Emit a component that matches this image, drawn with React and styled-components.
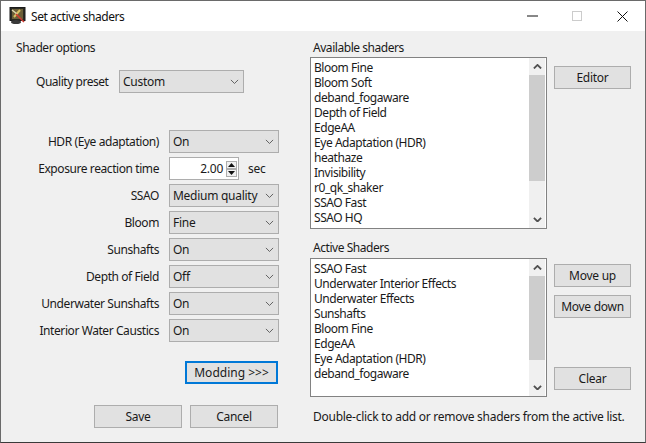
import React from "react";
import styled, { createGlobalStyle } from "styled-components";

const Global = createGlobalStyle`
  html, body { margin: 0; padding: 0; background: #e9e9e9; }
  #root { width: 646px; height: 443px; overflow: hidden; }
  * { box-sizing: border-box; }
`;

const Window = styled.div`
  width: 646px; height: 443px;
  border: 1px solid #6a6a6a; border-bottom-color: #3a3a3a;
  background: #f0f0f0;
  font-family: "Noto Sans", sans-serif;
  font-size: 12px; color: #1a1a1a; letter-spacing: -0.27px;
  display: flex; flex-direction: column;
`;
const TitleBar = styled.div`
  height: 30px; background: #fff; flex: none;
  display: flex; align-items: center; padding-left: 8px;
`;
const Title = styled.div`
  margin-left: 5px; flex: 1; font-size: 12px; color: #111; letter-spacing: -0.45px;
`;
const WinButton = styled.div`
  width: 45px; height: 30px; display: flex; align-items: center; justify-content: center;
`;
const Body = styled.div`
  flex: 1; display: flex; padding: 9px 14px 0 15px;
`;
const Left = styled.div`
  width: 263px; flex: none; margin-right: 31px;
  display: flex; flex-direction: column;
`;
const Right = styled.div`
  flex: 1; display: flex; flex-direction: column;
`;
const Heading = styled.div`
  height: 14px; line-height: 16px; white-space: nowrap; letter-spacing: -0.45px;
`;
const ListHeading = styled(Heading)`
  margin-left: 3px; margin-top: ${p => p.$mt || 0}px;
`;
const PresetRow = styled.div`
  display: flex; align-items: center; margin: 16px 0 37px 20px; gap: 6px;
`;
const Options = styled.div`
  display: flex; flex-direction: column; gap: 4px;
`;
const OptionRow = styled.div`
  display: flex; align-items: center; height: 23px;
`;
const Label = styled.div`
  width: 143px; margin-right: 10px; text-align: right; flex: none; white-space: nowrap; letter-spacing: -0.42px;
`;
const PresetLabel = styled.div`
  white-space: nowrap; width: 77px; letter-spacing: -0.47px;
`;
const Select = styled.div`
  width: ${p => p.$w}px; height: 23px; flex: none;
  background: #e1e1e1; border: 1px solid #adadad;
  display: flex; align-items: center; justify-content: space-between;
  padding: 0 4px 0 3px; white-space: nowrap;
`;
const Spin = styled.div`
  width: 70px; height: 23px; background: #fff; border: 1px solid #adadad;
  display: flex; align-items: center; justify-content: flex-end; padding-right: 1px;
`;
const SpinValue = styled.span`margin-right: 3px;`;
const SpinButtons = styled.div`
  display: flex; flex-direction: column; width: 11px;
`;
const SpinButton = styled.div`
  height: 8px; border: 1px solid #adadad; background: #f0f0f0;
  display: flex; align-items: center; justify-content: center;
`;
const Unit = styled.span`margin-left: 9px;`;
const Btn = styled.div`
  width: ${p => p.$w}px; height: 23px; flex: none;
  background: #e1e1e1; border: ${p => (p.$focus ? "2px solid #0078d7" : "1px solid #adadad")};
  display: flex; align-items: center; justify-content: center; white-space: nowrap;
  letter-spacing: ${p => (p.$focus ? "0" : "inherit")};
`;
const ModdingRow = styled.div`
  display: flex; justify-content: flex-end; margin: 19px 1px 0 0;
`;
const FooterRow = styled.div`
  display: flex; justify-content: flex-end; gap: 8px; margin: 21px 1px 0 0;
`;
const ListRow = styled.div`
  display: flex; gap: 7px; margin-top: ${p => p.$mt}px;
`;
const List = styled.div`
  width: 237px; height: ${p => p.$h}px; background: #fff; border: 1px solid #828282;
  display: flex; flex: none;
`;
const Items = styled.div`
  flex: 1; padding: 2px 3px; line-height: 15px; white-space: nowrap; overflow: hidden; letter-spacing: -0.45px;
`;
const Scroll = styled.div`
  width: 16px; flex: none; margin-right: 1px; background: #f0f0f0;
  display: flex; flex-direction: column; align-items: stretch;
`;
const ScrollArrow = styled.div`
  height: 17px; flex: none; display: flex; align-items: center; justify-content: center;
`;
const Thumb = styled.div`
  height: ${p => p.$h}px; background: #cdcdcd; flex: none;
`;
const Track = styled.div`flex: 1;`;
const SideButtons = styled.div`
  display: flex; flex-direction: column; padding-top: ${p => p.$pt}px;
`;
const Spacer = styled.div`height: ${p => p.$h}px;`;
const Hint = styled.div`
  margin: 11px 0 0 3px; white-space: nowrap;
`;

const Chevron = ({ up, size = 9, color = "#555", width = 1 }) => (
  <svg width={size} height={size * 0.6} viewBox="0 0 10 6">
    <path d={up ? "M1 5 L5 1 L9 5" : "M1 1 L5 5 L9 1"} fill="none" stroke={color} strokeWidth={width} />
  </svg>
);

const Triangle = ({ up }) => (
  <svg width="7" height="4" viewBox="0 0 7 4">
    <path d={up ? "M0 4 L3.5 0 L7 4Z" : "M0 0 L3.5 4 L7 0Z"} fill="#111" />
  </svg>
);

const DropSelect = ({ w, value }) => (
  <Select $w={w}>
    <span>{value}</span>
    <Chevron />
  </Select>
);

const ScrollBar = ({ thumb }) => (
  <Scroll>
    <ScrollArrow><Chevron up size={9} color="#505050" width={2} /></ScrollArrow>
    <Thumb $h={thumb} />
    <Track />
    <ScrollArrow><Chevron size={9} color="#505050" width={2} /></ScrollArrow>
  </Scroll>
);

const options = [
  ["HDR (Eye adaptation)", "On"],
  ["Exposure reaction time", null],
  ["SSAO", "Medium quality"],
  ["Bloom", "Fine"],
  ["Sunshafts", "On"],
  ["Depth of Field", "Off"],
  ["Underwater Sunshafts", "On"],
  ["Interior Water Caustics", "On"],
];
const available = ["Bloom Fine", "Bloom Soft", "deband_fogaware", "Depth of Field", "EdgeAA", "Eye Adaptation (HDR)", "heathaze", "Invisibility", "r0_qk_shaker", "SSAO Fast", "SSAO HQ"];
const active = ["SSAO Fast", "Underwater Interior Effects", "Underwater Effects", "Sunshafts", "Bloom Fine", "EdgeAA", "Eye Adaptation (HDR)", "deband_fogaware"];

const AppIcon = () => (
  <svg width="17" height="18" viewBox="0 0 17 18">
    <rect x="1" y="0.5" width="15" height="13" fill="#2b2a22" stroke="#1a1a1a" />
    <rect x="3" y="2" width="11" height="10" fill="#6b5f38" />
    <path d="M5 10 L11 3" stroke="#d9c060" strokeWidth="2" />
    <path d="M3 3 L8 7" stroke="#e0d8b0" strokeWidth="1.5" />
    <path d="M7 7 L15 15" stroke="#cf3a30" strokeWidth="1.6" />
    <ellipse cx="7" cy="15" rx="5" ry="2" fill="#3a3a3a" />
  </svg>
);

export default function App() {
  return (
    <Window>
      <Global />
      <TitleBar>
        <AppIcon />
        <Title>Set active shaders</Title>
        <WinButton>
          <svg width="11" height="2" viewBox="0 0 11 2"><path d="M0 1H11" stroke="#111" /></svg>
        </WinButton>
        <WinButton>
          <svg width="11" height="11" viewBox="0 0 11 11"><rect x="0.5" y="0.5" width="9" height="9" fill="none" stroke="#ccc" /></svg>
        </WinButton>
        <WinButton>
          <svg width="11" height="11" viewBox="0 0 11 11"><path d="M0.5 0.5L10.5 10.5M10.5 0.5L0.5 10.5" stroke="#111" /></svg>
        </WinButton>
      </TitleBar>
      <Body>
        <Left>
          <Heading>Shader options</Heading>
          <PresetRow>
            <PresetLabel>Quality preset</PresetLabel>
            <DropSelect w={125} value="Custom" />
          </PresetRow>
          <Options>
            {options.map(([label, value]) => (
              <OptionRow key={label}>
                <Label>{label}</Label>
                {value ? (
                  <DropSelect w={110} value={value} />
                ) : (
                  <>
                    <Spin>
                      <SpinValue>2.00</SpinValue>
                      <SpinButtons>
                        <SpinButton><Triangle up /></SpinButton>
                        <SpinButton><Triangle /></SpinButton>
                      </SpinButtons>
                    </Spin>
                    <Unit>sec</Unit>
                  </>
                )}
              </OptionRow>
            ))}
          </Options>
          <ModdingRow><Btn $w={93} $focus>Modding &gt;&gt;&gt;</Btn></ModdingRow>
          <FooterRow>
            <Btn $w={88}>Save</Btn>
            <Btn $w={88}>Cancel</Btn>
          </FooterRow>
        </Left>
        <Right>
          <ListHeading>Available shaders</ListHeading>
          <ListRow $mt={3}>
            <List $h={172}>
              <Items>{available.map(s => <div key={s}>{s}</div>)}</Items>
              <ScrollBar thumb={106} />
            </List>
            <SideButtons $pt={9}><Btn $w={77}>Editor</Btn></SideButtons>
          </ListRow>
          <ListHeading $mt={11}>Active Shaders</ListHeading>
          <ListRow $mt={4}>
            <List $h={139}>
              <Items>{active.map(s => <div key={s}>{s}</div>)}</Items>
              <ScrollBar thumb={84} />
            </List>
            <SideButtons $pt={6}>
              <Btn $w={77}>Move up</Btn>
              <Spacer $h={8} />
              <Btn $w={77}>Move down</Btn>
              <Spacer $h={49} />
              <Btn $w={77}>Clear</Btn>
            </SideButtons>
          </ListRow>
          <Hint>Double-click to add or remove shaders from the active list.</Hint>
        </Right>
      </Body>
    </Window>
  );
}
